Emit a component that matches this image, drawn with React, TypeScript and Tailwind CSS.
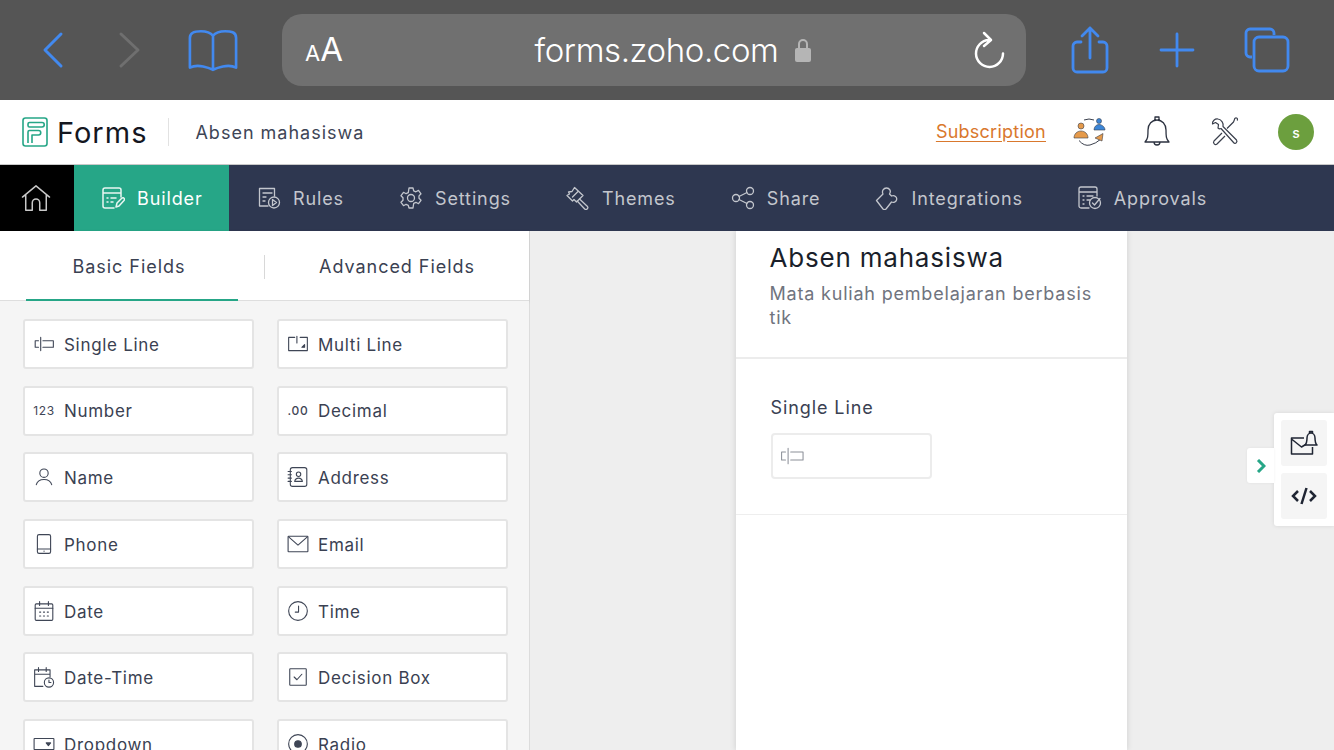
import type { ReactNode } from 'react';

function Icon({ size = 24, box = 24, sw = 1.5, className = '', children }: { size?: number; box?: number; sw?: number; className?: string; children: ReactNode }) {
  return (
    <svg width={size} height={size} viewBox={`0 0 ${box} ${box}`} fill="none" stroke="currentColor" strokeWidth={sw} strokeLinecap="round" strokeLinejoin="round" className={`shrink-0 ${className}`}>
      {children}
    </svg>
  );
}

const fieldIcons: Record<string, ReactNode> = {
  'Single Line': (
    <>
      <path d="M5 7H2v6h3M7 4v12M9 7h9.500v6H9" />
    </>
  ),
  'Multi Line': (
    <>
      <path d="M7 4H1.500v12h17V4H12M9 3v6" />
      <path d="M16 13h-2.500l2.500-2.500z" fill="currentColor" />
    </>
  ),
  Name: (
    <>
      <circle cx="10" cy="6.500" r="3.800" />
      <path d="M3 17c.8-3.200 3.500-4.700 7-4.700s6.200 1.500 7 4.700" />
    </>
  ),
  Address: (
    <>
      <rect x="3" y="1.500" width="15" height="17" rx="2" />
      <circle cx="10.500" cy="7.500" r="2" />
      <path d="M7 14c.4-2 1.800-3 3.500-3s3.100 1 3.500 3zM1 5h3M1 8h3M1 11h3M1 14h3" />
    </>
  ),
  Phone: (
    <>
      <rect x="4" y="1.500" width="12" height="17" rx="1.500" />
      <path d="M4 14.500h12M10 16.500h.1" />
    </>
  ),
  Email: (
    <>
      <rect x="1" y="3" width="18" height="14" rx=".5" />
      <path d="M1.500 3.500 10 11l8.500-7.500" />
    </>
  ),
  Date: (
    <>
      <rect x="2" y="3.500" width="16" height="15" rx="1" />
      <path d="M2 7.500h16M6 1.500v3.500M14 1.500v3.500M6 11h1M9.500 11h1M13 11h1M6 14.500h1M9.500 14.500h1M13 14.500h1" />
    </>
  ),
  Time: (
    <>
      <circle cx="10" cy="10" r="8.500" />
      <path d="M10.500 5.500V11H7.500" />
    </>
  ),
  'Date-Time': (
    <>
      <path d="M9 18.500H1.500v-15h14V10M1.500 7.500h14M5 1.500V5M12 1.500V5" />
      <circle cx="14.500" cy="15" r="4.200" />
      <path d="M14.500 12.800V15h1.800" />
    </>
  ),
  'Decision Box': (
    <>
      <rect x="2.500" y="2.500" width="15" height="15" rx=".5" />
      <path d="m6.500 10 2.500 2.500 4.500-5" />
    </>
  ),
  Dropdown: (
    <>
      <rect x="1" y="5" width="18" height="10" rx=".5" />
      <path d="M12 9h4l-2 2.500z" fill="currentColor" />
    </>
  ),
  Radio: (
    <>
      <circle cx="10" cy="10" r="8.500" />
      <circle cx="10" cy="10" r="3" fill="currentColor" />
    </>
  ),
};

const fields = [
  'Single Line', 'Multi Line', 'Number', 'Decimal', 'Name', 'Address', 'Phone', 'Email',
  'Date', 'Time', 'Date-Time', 'Decision Box', 'Dropdown', 'Radio',
];

function FieldIcon({ name }: { name: string }) {
  if (name === 'Number') {
    return <span className="w-[22px] shrink-0 text-center text-[12px] leading-5 tracking-[0.6px] text-[#3f4656]">123</span>;
  }
  if (name === 'Decimal') {
    return <span className="w-[22px] shrink-0 text-center text-[12px] font-medium leading-5 text-[#3f4656]">.00</span>;
  }
  return (
    <Icon size={22} box={20} sw={1} className="text-[#3f4656]">
      {fieldIcons[name]}
    </Icon>
  );
}

function FieldButton({ name }: { name: string }) {
  return (
    <div className="flex h-[50px] items-center gap-[9px] rounded-[3px] border-2 border-[#e4e4e4] bg-white pl-[8px] text-[17px] tracking-[0.7px] text-[#3a4152]">
      <FieldIcon name={name} />
      <span className="pt-[3px]">{name}</span>
    </div>
  );
}

const navItems: { label: string; icon: ReactNode }[] = [
  {
    label: 'Rules',
    icon: (
      <>
        <path d="M11 20H2.500V2.500h15V10M6 7h9M6 11h3M6 15h2" />
        <circle cx="17" cy="16.500" r="5.500" />
        <path d="m15.500 13.500 4 3-4 3z" />
      </>
    ),
  },
  {
    label: 'Settings',
    icon: (
      <>
        <path d="M10 2h4l.7 2.800 2.200 1 2.600-1.400 2.500 3.400-2 2.100v2.300l2 2.100-2.500 3.400-2.600-1.400-2.200 1L14 22h-4l-.7-2.700-2.200-1-2.600 1.400L2 16.300l2-2.100v-2.400L2 9.700l2.500-3.400 2.600 1.400 2.200-1z" />
        <circle cx="12" cy="12" r="3.500" />
      </>
    ),
  },
  {
    label: 'Themes',
    icon: (
      <>
        <path d="m8.500 1.500 8.500 8-6.500 6.500-2.500-2.500-1.500 1.500L1 9.500l2.500-1.500L2.500 6 6 5.500z" />
        <path d="M6.500 11 12 5.500M13.500 13l8 7.500a1.900 1.900 0 0 1-2.800 2.500l-7.500-8" />
      </>
    ),
  },
  {
    label: 'Share',
    icon: (
      <>
        <circle cx="5" cy="12" r="3.500" />
        <circle cx="19" cy="5" r="3.500" />
        <circle cx="19" cy="19" r="3.500" />
        <path d="m8 10.500 8-4M8 13.500l8 4" />
      </>
    ),
  },
  {
    label: 'Integrations',
    icon: (
      <>
        <path d="M1.500 14.500 8 8c-1.500-3 .5-6 3.500-6 3 0 5 3 3 6l2 2c3-1 6 1 5 4-.5 2-3 3-5 2l-5.500 7c-1 .8-2 .8-3 0z" />
      </>
    ),
  },
  {
    label: 'Approvals',
    icon: (
      <>
        <path d="M11 22H3a2 2 0 0 1-2-2V3a2 2 0 0 1 2-2h14a2 2 0 0 1 2 2v7M1 6h18M5 10h1M9 10h6M5 14h1M9 14h3M5 18h1" />
        <circle cx="17" cy="17" r="5.500" />
        <path d="m14.500 17 2 2 5.500-6.500" />
      </>
    ),
  },
];

function BrowserBar() {
  return (
    <div className="flex h-[100px] items-center bg-[#555555] text-[#4289ef]">
      <div className="flex w-[282px] items-center">
        <svg width="24" height="38" viewBox="0 0 24 38" fill="none" stroke="currentColor" strokeWidth="3" strokeLinecap="round" strokeLinejoin="round" className="ml-[42px]">
          <path d="M19 3 3 19l16 16" />
        </svg>
        <svg width="24" height="38" viewBox="0 0 24 38" fill="none" stroke="#6f6f6f" strokeWidth="3" strokeLinecap="round" strokeLinejoin="round" className="ml-[52px]">
          <path d="m3 3 17 16L3 35" />
        </svg>
        <svg width="56" height="44" viewBox="0 0 50 40" fill="none" stroke="currentColor" strokeWidth="2.400" strokeLinecap="round" strokeLinejoin="round" className="ml-[43px]">
          <path d="M25 7c-3-3.500-7-4-11-4-5 0-10 .5-10 6v27c4-2 7-2 12-1 3 .6 6 1.500 9 3 3-1.500 6-2.400 9-3 5-1 8-1 12 1V9c0-5.500-5-6-10-6-4 0-8 .5-11 4zm0 0v31" />
        </svg>
      </div>
      <div className="flex h-[72px] w-[744px] items-center rounded-[20px] bg-[#707070] text-white">
        <div className="ml-[23px] flex w-[40px] items-baseline">
          <span className="text-[22px]">A</span>
          <span className="text-[33px]">A</span>
        </div>
        <div className="flex flex-1 items-center justify-center gap-[16px] pl-[30px]">
          <span className="whitespace-nowrap pt-[1px] text-[33px] font-light tracking-[-0.4px]">forms.zoho.com</span>
          <svg width="18" height="27" viewBox="0 0 18 27" fill="#b5b5b5">
            <path d="M5 12V7a4 4 0 0 1 8 0v5" fill="none" stroke="#b5b5b5" strokeWidth="2" />
            <rect x="1" y="11" width="16" height="14" rx="2" />
          </svg>
        </div>
        <svg width="34" height="38" viewBox="0 0 34 38" fill="none" stroke="white" strokeWidth="2.500" strokeLinecap="round" strokeLinejoin="round" className="mr-[20px]">
          <path d="M17 9a13.500 13.500 0 1 0 14 13.500M12 2l7 7-7 6" />
        </svg>
      </div>
      <svg width="40" height="50" viewBox="0 0 40 50" fill="none" stroke="currentColor" strokeWidth="2.800" strokeLinecap="round" strokeLinejoin="round" className="ml-[44px]">
        <path d="M11 17H7a4 4 0 0 0-4 4v22a4 4 0 0 0 4 4h26a4 4 0 0 0 4-4V21a4 4 0 0 0-4-4h-4M20 33V3M12 11l8-8 8 8" />
      </svg>
      <svg width="38" height="38" viewBox="0 0 38 38" fill="none" stroke="currentColor" strokeWidth="2.800" strokeLinecap="round" className="ml-[48px]">
        <path d="M19 3v32M3 19h32" />
      </svg>
      <svg width="48" height="48" viewBox="0 0 48 48" fill="none" stroke="currentColor" strokeWidth="2.800" strokeLinejoin="round" className="ml-[47px]">
        <path d="M9 31H7a4 4 0 0 1-4-4V7a4 4 0 0 1 4-4h20a4 4 0 0 1 4 4v2" />
        <rect x="11" y="11" width="34" height="34" rx="5" />
      </svg>
    </div>
  );
}

function AppHeader() {
  return (
    <div className="flex h-[65px] items-center border-b border-[#c9c9c9] bg-white">
      <svg width="28" height="32" viewBox="0 0 28 32" fill="none" stroke="#26a687" strokeWidth="1.600" strokeLinejoin="round" className="ml-[21px]">
        <rect x="2" y="2" width="24" height="28" rx="2.500" />
        <path d="M7 8a1.500 1.500 0 0 1 1.500-1.500H21a1.500 1.500 0 0 1 0 4.500H8.500A1.500 1.500 0 0 1 7 9.500zM7 27V16a1.500 1.500 0 0 1 1.500-1.500h9a2 2 0 0 1 0 4.500H11v8" />
      </svg>
      <span className="ml-[8px] text-[29px] leading-none tracking-[1px] text-[#14171f]">Forms</span>
      <div className="ml-[21px] h-[28px] w-px bg-[#e2e2e2]" />
      <span className="ml-[26px] text-[18px] tracking-[1px] text-[#3e4556]">Absen mahasiswa</span>
      <a className="-mt-[2px] ml-auto text-[18px] tracking-[0.25px] text-[#d9782d] underline underline-offset-[3px]">Subscription</a>
      <svg width="34" height="32" viewBox="0 0 34 32" fill="none" className="ml-[27px]">
        <path d="M11 4q5-2 10 0M6 24.500q5 6 11 4.500 6-1.500 11-6" stroke="#3a3f4c" strokeWidth="1" />
        <circle cx="8" cy="10" r="3" fill="#e59a4b" stroke="#3a3f4c" strokeWidth=".6" />
        <path d="M1 22c0-4 3-7 7-7s7 3 7 7z" fill="#e59a4b" stroke="#3a3f4c" strokeWidth=".6" />
        <circle cx="26" cy="5" r="2.500" fill="#3b86d8" stroke="#3a3f4c" strokeWidth=".6" />
        <path d="M21 14c0-3 2-5.500 5-5.500s6 2.500 6 5.500z" fill="#3b86d8" stroke="#3a3f4c" strokeWidth=".6" />
        <path d="m30 17.500-8 4.500 7 3z" fill="#e59a4b" stroke="#3a3f4c" strokeWidth=".6" />
      </svg>
      <svg width="28" height="34" viewBox="0 0 28 34" fill="none" stroke="#2c3240" strokeWidth="1.300" strokeLinejoin="round" className="ml-[36px]">
        <path d="M2 27c3-3 3-6 3-12 0-6 4-10 9-10s9 4 9 10c0 6 0 9 3 12zM12 5V2h4v3M11 27a3 3 0 0 0 6 0" />
      </svg>
      <svg width="30" height="30" viewBox="0 0 30 30" fill="none" stroke="#3a3f4c" strokeWidth="1.200" strokeLinejoin="round" className="ml-[39px]">
        <path d="M8 2c-3-.5-6 2-5.500 5l3-1.500 3 2L8 11c1 1 2 1 3 .5L24 26c1 1.500 4-1 2.500-3L13 9.500c1-3-1.500-7-5-7.500z" />
        <path d="M27 3.500a1.500 1.500 0 1 0-2.500-1l-1 2.500-6.500 6.500M12 16 4 24c-1.500 2 1 4.500 3 3l8-8" />
      </svg>
      <div className="ml-[38px] mr-[20px] flex h-[36px] w-[36px] items-center justify-center rounded-full bg-[#6c9f3e] text-[14px] font-medium text-white">s</div>
    </div>
  );
}

function NavBar() {
  return (
    <div className="flex h-[66px] items-center bg-[#2e3750] text-[18px] tracking-[0.88px] text-[#c3c6cd]">
      <div className="flex h-full w-[74px] items-center justify-center bg-black">
        <svg width="32" height="28" viewBox="0 0 32 30" fill="none" stroke="#c9c9c9" strokeWidth="1.600" strokeLinejoin="round" strokeLinecap="round" className="-ml-[2px]">
          <path d="M1.500 14 16 2l14.500 12M5 12v16h7v-8a4 4 0 0 1 8 0v8h7V12" />
        </svg>
      </div>
      <div className="flex h-full w-[155px] items-center gap-[12px] bg-[#26a687] pl-[27px] text-white">
        <Icon className="text-[#e9f6f2]">
          <path d="M13 22H4a2 2 0 0 1-2-2V4a2 2 0 0 1 2-2h14a2 2 0 0 1 2 2v7M2 7h18M6 12h1M6 16h1M10 12h5M10 16h2" />
          <path d="m15 21 1-4 5-5c2-1 3 1 2 2.500l-5 5.500z" />
        </Icon>
        <span>Builder</span>
      </div>
      <div className="flex items-center gap-[55px] pl-[28px]">
        {navItems.map((item) => (
          <div key={item.label} className="flex items-center gap-[12px]">
            <Icon sw={1.300}>{item.icon}</Icon>
            <span>{item.label}</span>
          </div>
        ))}
      </div>
    </div>
  );
}

function FieldPanel() {
  return (
    <div className="flex w-[530px] shrink-0 flex-col border-r border-[#dcdcdc]">
      <div className="flex h-[70px] shrink-0 items-center border-b border-[#dedede] bg-white pt-[2px] text-[18px] tracking-[0.95px] text-[#3a4152] shadow-[0_1px_3px_rgba(0,0,0,0.12)]">
        <div className="relative flex h-full w-[264px] items-center justify-center">
          <span className="-ml-[6px]">Basic Fields</span>
          <div className="absolute bottom-[-1px] left-[26px] h-[2px] w-[212px] bg-[#26a687]" />
        </div>
        <div className="h-[24px] w-px bg-[#d8d8d8]" />
        <div className="flex flex-1 justify-center">Advanced Fields</div>
      </div>
      <div className="grid flex-1 grid-cols-[231px_231px] auto-rows-[50px] gap-x-[23px] gap-y-[16.7px] overflow-hidden bg-[#f5f5f5] pl-[23px] pt-[18px]">
        {fields.map((name) => (
          <FieldButton key={name} name={name} />
        ))}
      </div>
    </div>
  );
}

function FormCanvas() {
  return (
    <div className="relative flex flex-1 justify-center overflow-hidden bg-[#eeeeee] pl-[1px] pr-[3px]">
      <div className="flex h-full w-[391px] flex-col bg-white shadow-[0_0_6px_rgba(0,0,0,0.14)]">
        <div className="h-[128px] shrink-0 border-b-2 border-[#ececec] px-[34px] pt-[10px]">
          <div className="text-[26px] leading-[34px] tracking-[0.8px] text-[#1a1f2b]">Absen mahasiswa</div>
          <div className="mt-[7px] text-[18px] leading-[24px] tracking-[0.8px] text-[#70747e]">Mata kuliah pembelajaran berbasis tik</div>
        </div>
        <div className="h-[156px] shrink-0 border-b border-[#eeeeee] px-[35px] pt-[36px]">
          <div className="text-[18px] leading-[26px] tracking-[0.9px] text-[#3a4152]">Single Line</div>
          <div className="mt-[12px] flex h-[46px] w-[161px] items-center rounded-[4px] border-2 border-[#ececec] pl-[6px] text-[#8b8f98]">
            <Icon size={26} box={20} sw={0.8}>
              {fieldIcons['Single Line']}
            </Icon>
          </div>
        </div>
      </div>
      <div className="absolute right-0 top-[182px] flex w-[60px] flex-col gap-[7px] rounded-l-[3px] bg-white py-[7px] pl-[7px] shadow-[0_0_4px_rgba(0,0,0,0.1)]">
        <div className="flex h-[46px] w-[46px] items-center justify-center rounded-[3px] bg-[#f5f5f5] text-[#1f2533]">
          <svg width="28" height="26" viewBox="0 0 28 26" fill="none" stroke="currentColor" strokeWidth="1.500" strokeLinejoin="round">
            <path d="M14 8H1.500v16h21V17M1.500 9l10 8 5-3" />
            <path d="M15 15c2-2 2-4 2-7 0-3 2-5 4-5s4 2 4 5c0 3 0 5 2 7zM19.500 3V1.500h3V3" fill="#f5f5f5" />
          </svg>
        </div>
        <div className="flex h-[46px] w-[46px] items-center justify-center rounded-[3px] bg-[#f5f5f5] text-[#1f2533]">
          <svg width="26" height="18" viewBox="0 0 26 18" fill="none" stroke="currentColor" strokeWidth="2.500">
            <path d="M7 4 2 9l5 5M19 4l5 5-5 5M15.500 1l-5 16" />
          </svg>
        </div>
      </div>
      <div className="absolute right-[60px] top-[217px] flex h-[35px] w-[27px] items-center justify-center rounded-l-[3px] bg-white text-[#26a687] shadow-[0_0_3px_rgba(0,0,0,0.06)]">
        <svg width="10" height="14" viewBox="0 0 10 14" fill="none" stroke="currentColor" strokeWidth="3">
          <path d="m2 1 6 6-6 6" />
        </svg>
      </div>
    </div>
  );
}

export default function App() {
  return (
    <div className="flex h-[750px] w-full flex-col overflow-hidden font-['Inter',sans-serif]">
      <BrowserBar />
      <AppHeader />
      <NavBar />
      <div className="flex min-h-0 flex-1">
        <FieldPanel />
        <FormCanvas />
      </div>
    </div>
  );
}
